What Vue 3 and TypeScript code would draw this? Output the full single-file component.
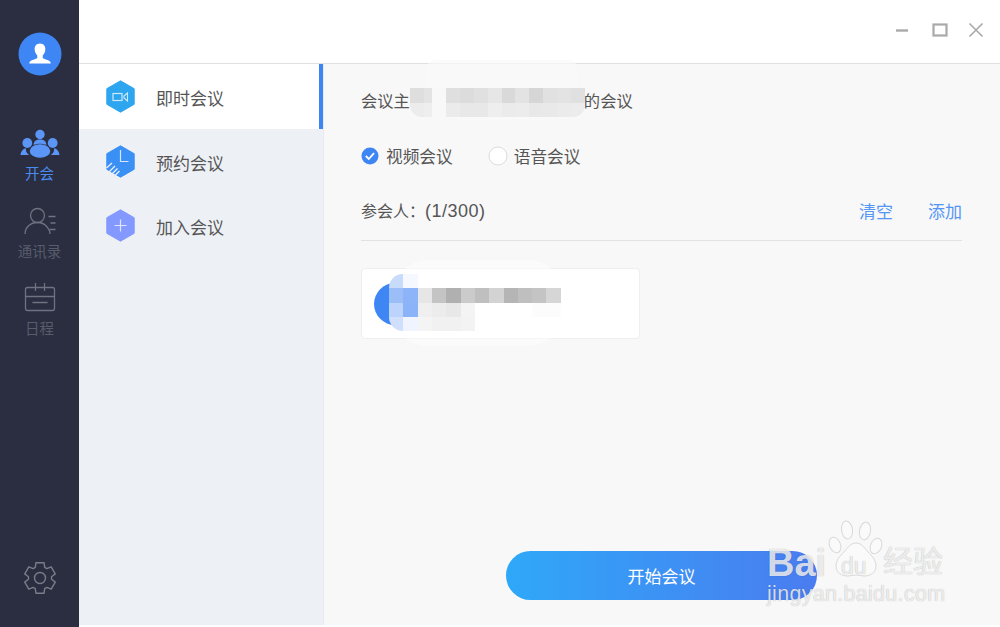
<script setup lang="ts">
const hexPts = '14.5,0.8 28.2,8.7 28.2,24.3 14.5,32.2 0.8,24.3 0.8,8.7'

function gearPath(cx: number, cy: number): string {
  const pts: string[] = []
  const pol = (r: number, deg: number) => {
    const a = (deg * Math.PI) / 180
    return `${(cx + r * Math.cos(a)).toFixed(2)} ${(cy + r * Math.sin(a)).toFixed(2)}`
  }
  for (let i = 0; i < 6; i++) {
    const c = -90 + i * 60
    pts.push(pol(11.6, c - 24), pol(15.8, c - 15), pol(15.8, c + 15), pol(11.6, c + 24))
  }
  return 'M' + pts.join('L') + 'Z'
}
const gear = gearPath(20, 20)

const topCells: string[] = [
  '#dedede', '#e3e3e3', '#f8f8f8', '#dfdfdf', '#dcdcdc', '#e0e0e0', '#e6e6e6', '#d9d9d9', '#e3e3e3', '#d6d6d6', '#e1e1e1', '#e3e3e3', '#e0e0e0',
  '#ececec', '#eeeeee', '#f8f8f8', '#ebebeb', '#e8e8e8', '#e8e8e8', '#eeeeee', '#ebebeb', '#ececec', '#e8e8e8', '#e9e9e9', '#ebebeb', '#ececec',
]
const cardCells: string[] = [
  '#c8dbfb', '#f5f8fe', '#fff', '#fff', '#fff', '#fff', '#fff', '#fff', '#fff', '#fff', '#fff', '#fff',
  '#9bbdf8', '#8db4f8', '#e6e6e6', '#c4c4c4', '#b0b0b0', '#cbcbcb', '#bfbfbf', '#d3d3d3', '#b5b5b5', '#bfbfbf', '#c4c4c4', '#d6d6d6',
  '#bcd3fb', '#8bb3f8', '#efefef', '#ececec', '#e8e8e8', '#f4f4f4', '#fff', '#fff', '#fff', '#fff', '#fcfcfc', '#fcfcfc',
  '#d0e0fc', '#eff4fe', '#f4f4f4', '#f1f1f1', '#f1f1f1', '#f3f3f3', '#fff', '#fff', '#fff', '#fff', '#fff', '#fff',
]
</script>

<template>
  <div class="app">
    <aside class="rail">
      <div class="avatar">
        <svg width="44" height="44" viewBox="0 0 44 44">
          <circle cx="22" cy="22" r="21.5" fill="#3f86f5" />
          <path d="M22 11.5c-3.7 0-5.6 2.8-5.3 6.2.2 2.4 1.2 4.4 2.6 5.7v1.8c0 .7-.5 1.2-1.2 1.5-2.6 1-5.1 1.5-6.3 3-.4.6-.6 1.3-.6 1.8h21.6c0-.5-.2-1.2-.6-1.8-1.2-1.5-3.7-2-6.3-3-.7-.3-1.2-.8-1.2-1.5v-1.8c1.4-1.3 2.4-3.3 2.6-5.7.3-3.4-1.6-6.2-5.3-6.2z" fill="#fff" />
        </svg>
      </div>
      <nav class="rail-nav">
        <div class="rail-item active">
          <svg width="42" height="40" viewBox="-1 0 42 40" fill="#5b95f5">
            <circle cx="20" cy="10.5" r="4.7" />
            <path d="M13.5 21c.3-4 2.800-5.500 6.500-5.500s6.200 1.500 6.500 5.500c-2-.8-4.200-1.200-6.500-1.200s-4.500.4-6.500 1.200z" />
            <circle cx="7.300" cy="19" r="4.900" />
            <circle cx="32.700" cy="19" r="4.900" />
            <path d="M.5 31c.4-3.600 2.200-6.300 5.600-6.800-.4 1.200-.2 3 .6 4.300.6.900 1.400 1.700 2.400 2.500z" />
            <path d="M39.500 31c-.4-3.600-2.200-6.300-5.600-6.800.4 1.200.2 3-.6 4.300-.6.900-1.400 1.700-2.400 2.500z" />
            <ellipse cx="20" cy="27" rx="10.300" ry="6.800" />
          </svg>
          <span>开会</span>
        </div>
        <div class="rail-item">
          <svg width="40" height="40" viewBox="0 0 40 40" fill="none" stroke="#6f7280" stroke-width="1.300">
            <circle cx="17.500" cy="13.500" r="7" />
            <path d="M5 32c0-6.500 5.500-11.500 12.500-11.500 3.500 0 6.500 1.200 8.500 3.200 2 2 4 5 4 8.300" />
            <path d="M28.500 14.500h7M30.500 21h5M29.500 27.500h6" />
          </svg>
          <span>通讯录</span>
        </div>
        <div class="rail-item">
          <svg width="40" height="40" viewBox="0 0 40 40" fill="none" stroke="#6f7280" stroke-width="1.300">
            <rect x="5.500" y="8.500" width="29" height="23" rx="2" />
            <path d="M15.500 4v8M24.500 4v8M5.500 17.500h29M12.500 23.500h15" />
          </svg>
          <span>日程</span>
        </div>
      </nav>
      <div class="gear">
        <svg width="40" height="40" viewBox="0 0 40 40" fill="none" stroke="#7a7d88" stroke-width="1.400" stroke-linejoin="round">
          <path :d="gear" />
          <circle cx="20" cy="20" r="5.500" />
        </svg>
      </div>
    </aside>

    <div class="main">
      <header class="titlebar">
        <svg class="ctl" width="100" height="20" viewBox="0 0 100 20" fill="none" stroke="#a9a9a9">
          <path d="M1 10.500h12" stroke-width="2.400" />
          <rect x="38.500" y="4.500" width="13" height="11" stroke-width="2.200" />
          <path d="M74.500 3.500l13 13M87.500 3.500l-13 13" stroke-width="1.600" />
        </svg>
      </header>

      <div class="body">
        <nav class="side">
          <div class="side-item current">
            <svg class="hex" width="29" height="33" viewBox="0 0 29 33">
              <polygon :points="hexPts" fill="#2ea6ef" stroke="#2ea6ef" stroke-linejoin="round" />
              <rect x="7" y="13.500" width="9" height="7" fill="none" stroke="#cdeafc" stroke-width="1.200" />
              <path d="M18 16l3.500-3v8l-3.500-3z" fill="none" stroke="#cdeafc" stroke-width="1.100" />
            </svg>
            <span>即时会议</span>
          </div>
          <div class="side-item">
            <svg class="hex" width="29" height="33" viewBox="0 0 29 33">
              <polygon :points="hexPts" fill="#3a90f5" stroke="#3a90f5" stroke-linejoin="round" />
              <path d="M14.500 5v11.500h8" fill="none" stroke="#d6e7fd" stroke-width="1.200" />
              <path d="M.5 23l5.500-5M3 27l6-6M5.500 29.500l6-6M8.500 31l5-5" fill="none" stroke="#edf0f5" stroke-width="1.300" />
            </svg>
            <span>预约会议</span>
          </div>
          <div class="side-item">
            <svg class="hex" width="29" height="33" viewBox="0 0 29 33">
              <polygon :points="hexPts" fill="#8399ff" stroke="#8399ff" stroke-linejoin="round" />
              <path d="M14.500 10.500v12M8.500 16.500h12" fill="none" stroke="#dfe5ff" stroke-width="1.200" />
            </svg>
            <span>加入会议</span>
          </div>
        </nav>

        <section class="panel">
          <div class="topic">
            <span>会议主</span>
            <span class="topic-gap"></span>
            <span>的会议</span>
          </div>

          <div class="modes">
            <label class="mode">
              <svg width="18" height="18" viewBox="0 0 18 18">
                <circle cx="9" cy="9" r="8.500" fill="#3f86f5" />
                <path d="M4.800 9l3 3 5.200-5.800" fill="none" stroke="#fff" stroke-width="1.800" />
              </svg>
              <span>视频会议</span>
            </label>
            <label class="mode">
              <svg width="20" height="20" viewBox="0 0 20 20">
                <circle cx="10" cy="10" r="9" fill="#fff" stroke="#dcdcdc" />
              </svg>
              <span>语音会议</span>
            </label>
          </div>

          <div class="people-head">
            <span class="people-count">参会人：<span class="digits">(1/300)</span></span>
            <div class="links">
              <a>清空</a>
              <a>添加</a>
            </div>
          </div>

          <div class="card">
            <div class="card-avatar"></div>
          </div>

          <button class="start" type="button">开始会议</button>
        </section>
      </div>
    </div>

    <div class="smudge-top"></div>
    <div class="mosaic mosaic-top">
      <i v-for="(c, i) in topCells" :key="i" :style="{ background: c }"></i>
    </div>
    <div class="smudge-card"></div>
    <div class="mosaic mosaic-card">
      <i v-for="(c, i) in cardCells" :key="i" :style="{ background: c }"></i>
    </div>

    <div class="mark">
      <span class="mark-bai">Bai</span>
      <svg class="mark-paw" width="56" height="62" viewBox="0 0 56 62" fill="#fbfbfb" stroke="#d4d4d4" stroke-width="1">
        <ellipse cx="19" cy="11" rx="5.500" ry="9" transform="rotate(-8 19 11)" />
        <ellipse cx="37" cy="12" rx="5.500" ry="9" transform="rotate(10 37 12)" />
        <ellipse cx="7" cy="26" rx="5.500" ry="8" transform="rotate(-22 7 26)" />
        <ellipse cx="48" cy="27" rx="5.500" ry="8" transform="rotate(22 48 27)" />
        <path d="M28 24c5 0 8 4 12 9 4 4 8 8 8 14 0 7-6 10-12 10-3 0-5-1-8-1s-5 1-8 1c-6 0-12-3-12-10 0-6 4-10 8-14 4-5 7-9 12-9z" />
      </svg>
      <span class="mark-du">du</span>
      <span class="mark-jy">经验</span>
      <span class="mark-url">jingyan.baidu.com</span>
    </div>
  </div>
</template>

<style>
html, body { margin: 0; overflow: hidden; background: #fff; }
</style>

<style scoped>
.app {
  position: relative;
  display: flex;
  width: 1000px;
  height: 627px;
  overflow: hidden;
  background: #fff;
  font-family: "Liberation Sans", "Noto Sans CJK SC", sans-serif;
  color: #555;
}
.rail {
  display: flex;
  flex-direction: column;
  align-items: center;
  width: 79px;
  flex: none;
  background: #2a2e40;
}
.avatar { margin-top: 32px; height: 44px; }
.avatar svg { display: block; }
.rail-nav { margin-top: 48px; }
.rail-item {
  display: flex;
  flex-direction: column;
  align-items: center;
  height: 77.500px;
  font-size: 14.500px;
  line-height: 20px;
  color: #585c6b;
}
.rail-item svg { display: block; }
.rail-item.active { color: #4a8bf0; }
.gear { margin-top: auto; margin-bottom: 29px; height: 40px; }
.gear svg { display: block; }

.main {
  flex: 1;
  display: flex;
  flex-direction: column;
  min-width: 0;
}
.titlebar {
  flex: none;
  box-sizing: border-box;
  height: 64px;
  border-bottom: 1px solid #e0e0e0;
  display: flex;
  justify-content: flex-end;
  padding: 20px 5px 0 0;
}
.ctl { display: block; }
.body {
  flex: 1;
  display: flex;
  margin-bottom: 2px;
  min-height: 0;
}
.side {
  width: 245px;
  flex: none;
  box-sizing: border-box;
  background: #edf0f5;
  border-right: 1px solid #e8eaee;
}
.side-item {
  display: flex;
  align-items: center;
  gap: 21px;
  height: 64.500px;
  padding-left: 27px;
  font-size: 17px;
  color: #555;
}
.side-item span { position: relative; top: 1px; }
.hex { flex: none; display: block; }
.side-item.current {
  background: #fff;
  position: relative;
  height: 65px;
}
.side-item.current::after {
  content: "";
  position: absolute;
  top: 0;
  bottom: 0;
  right: 0;
  width: 4px;
  background: #3f86f5;
}
.panel {
  position: relative;
  flex: 1;
  display: flex;
  flex-direction: column;
  background: #f8f8f8;
  padding: 25px 38px 25px 37px;
  min-width: 0;
}
.topic {
  display: flex;
  align-items: center;
  height: 24px;
  font-size: 16.300px;
  line-height: 24px;
}
.topic-gap { width: 174px; }
.modes {
  display: flex;
  align-items: center;
  margin-top: 31px;
  height: 24px;
  gap: 35px;
  font-size: 16.700px;
}
.mode { display: flex; align-items: center; gap: 7px; }
.mode svg { display: block; }
.mode:last-child { gap: 6px; }
.people-head {
  display: flex;
  align-items: center;
  justify-content: space-between;
  margin-top: 21px;
  box-sizing: border-box;
  height: 52px;
  padding-bottom: 9px;
  border-bottom: 1px solid #e2e2e2;
  font-size: 16px;
}
.digits { font-size: 18px; letter-spacing: 0.500px; }
.links { display: flex; gap: 35px; font-size: 17px; color: #5596f5; }
.card {
  box-sizing: border-box;
  margin-top: 27px;
  width: 279px;
  height: 71px;
  background: #fff;
  border: 1px solid #eeeeee;
  border-radius: 4px;
  display: flex;
  align-items: center;
  padding-left: 12px;
}
.card-avatar {
  width: 42px;
  height: 42px;
  border-radius: 50%;
  background: #3f86f5;
}
.start {
  margin: auto 0 0 145px;
  width: 311px;
  height: 49px;
  border: 0;
  border-radius: 25px;
  background: linear-gradient(90deg, #2fa8f8, #4a7cf0);
  color: #fff;
  font: inherit;
  font-size: 17px;
}

.smudge-top {
  position: absolute;
  left: 426px;
  top: 60px;
  width: 152px;
  height: 60px;
  border-radius: 10px 10px 40px 40px;
  background: rgba(250, 250, 250, 0.7);
}
.mosaic {
  position: absolute;
  display: grid;
}
.mosaic i { display: block; }
.mosaic-top {
  left: 410px;
  top: 88px;
  grid-template-columns: 14px 8px 14px repeat(10, 13.900px);
  grid-auto-rows: 14.500px;
  border-radius: 0 0 12px 12px;
  overflow: hidden;
}
.smudge-card {
  position: absolute;
  left: 392px;
  top: 260px;
  width: 172px;
  height: 86px;
  border-radius: 36px;
  background: rgba(255, 255, 255, 0.45);
}
.mosaic-card {
  left: 389px;
  top: 274px;
  grid-template-columns: repeat(2, 14.400px) repeat(10, 14.300px);
  grid-auto-rows: 14.300px;
  border-radius: 14px 0 0 14px;
  overflow: hidden;
}

.mark span {
  position: absolute;
  color: rgba(255, 255, 255, 0.8);
  text-shadow: 0 0 1px rgba(0, 0, 0, 0.35);
  white-space: nowrap;
}
.mark-paw { position: absolute; left: 828px; top: 519px; opacity: 0.85; }
.mark-bai {
  left: 767px;
  top: 548px;
  font-size: 38px;
  line-height: 30px;
  font-weight: 700;
}
.mark-du {
  left: 841px;
  top: 553px;
  font-size: 23px;
  line-height: 26px;
}
.mark-jy {
  left: 883px;
  top: 545px;
  font-size: 30px;
  line-height: 34px;
  font-weight: 400;
}
.mark-url {
  left: 767px;
  top: 583px;
  font-size: 21.500px;
  line-height: 22px;
  letter-spacing: 0.300px;
}
</style>
